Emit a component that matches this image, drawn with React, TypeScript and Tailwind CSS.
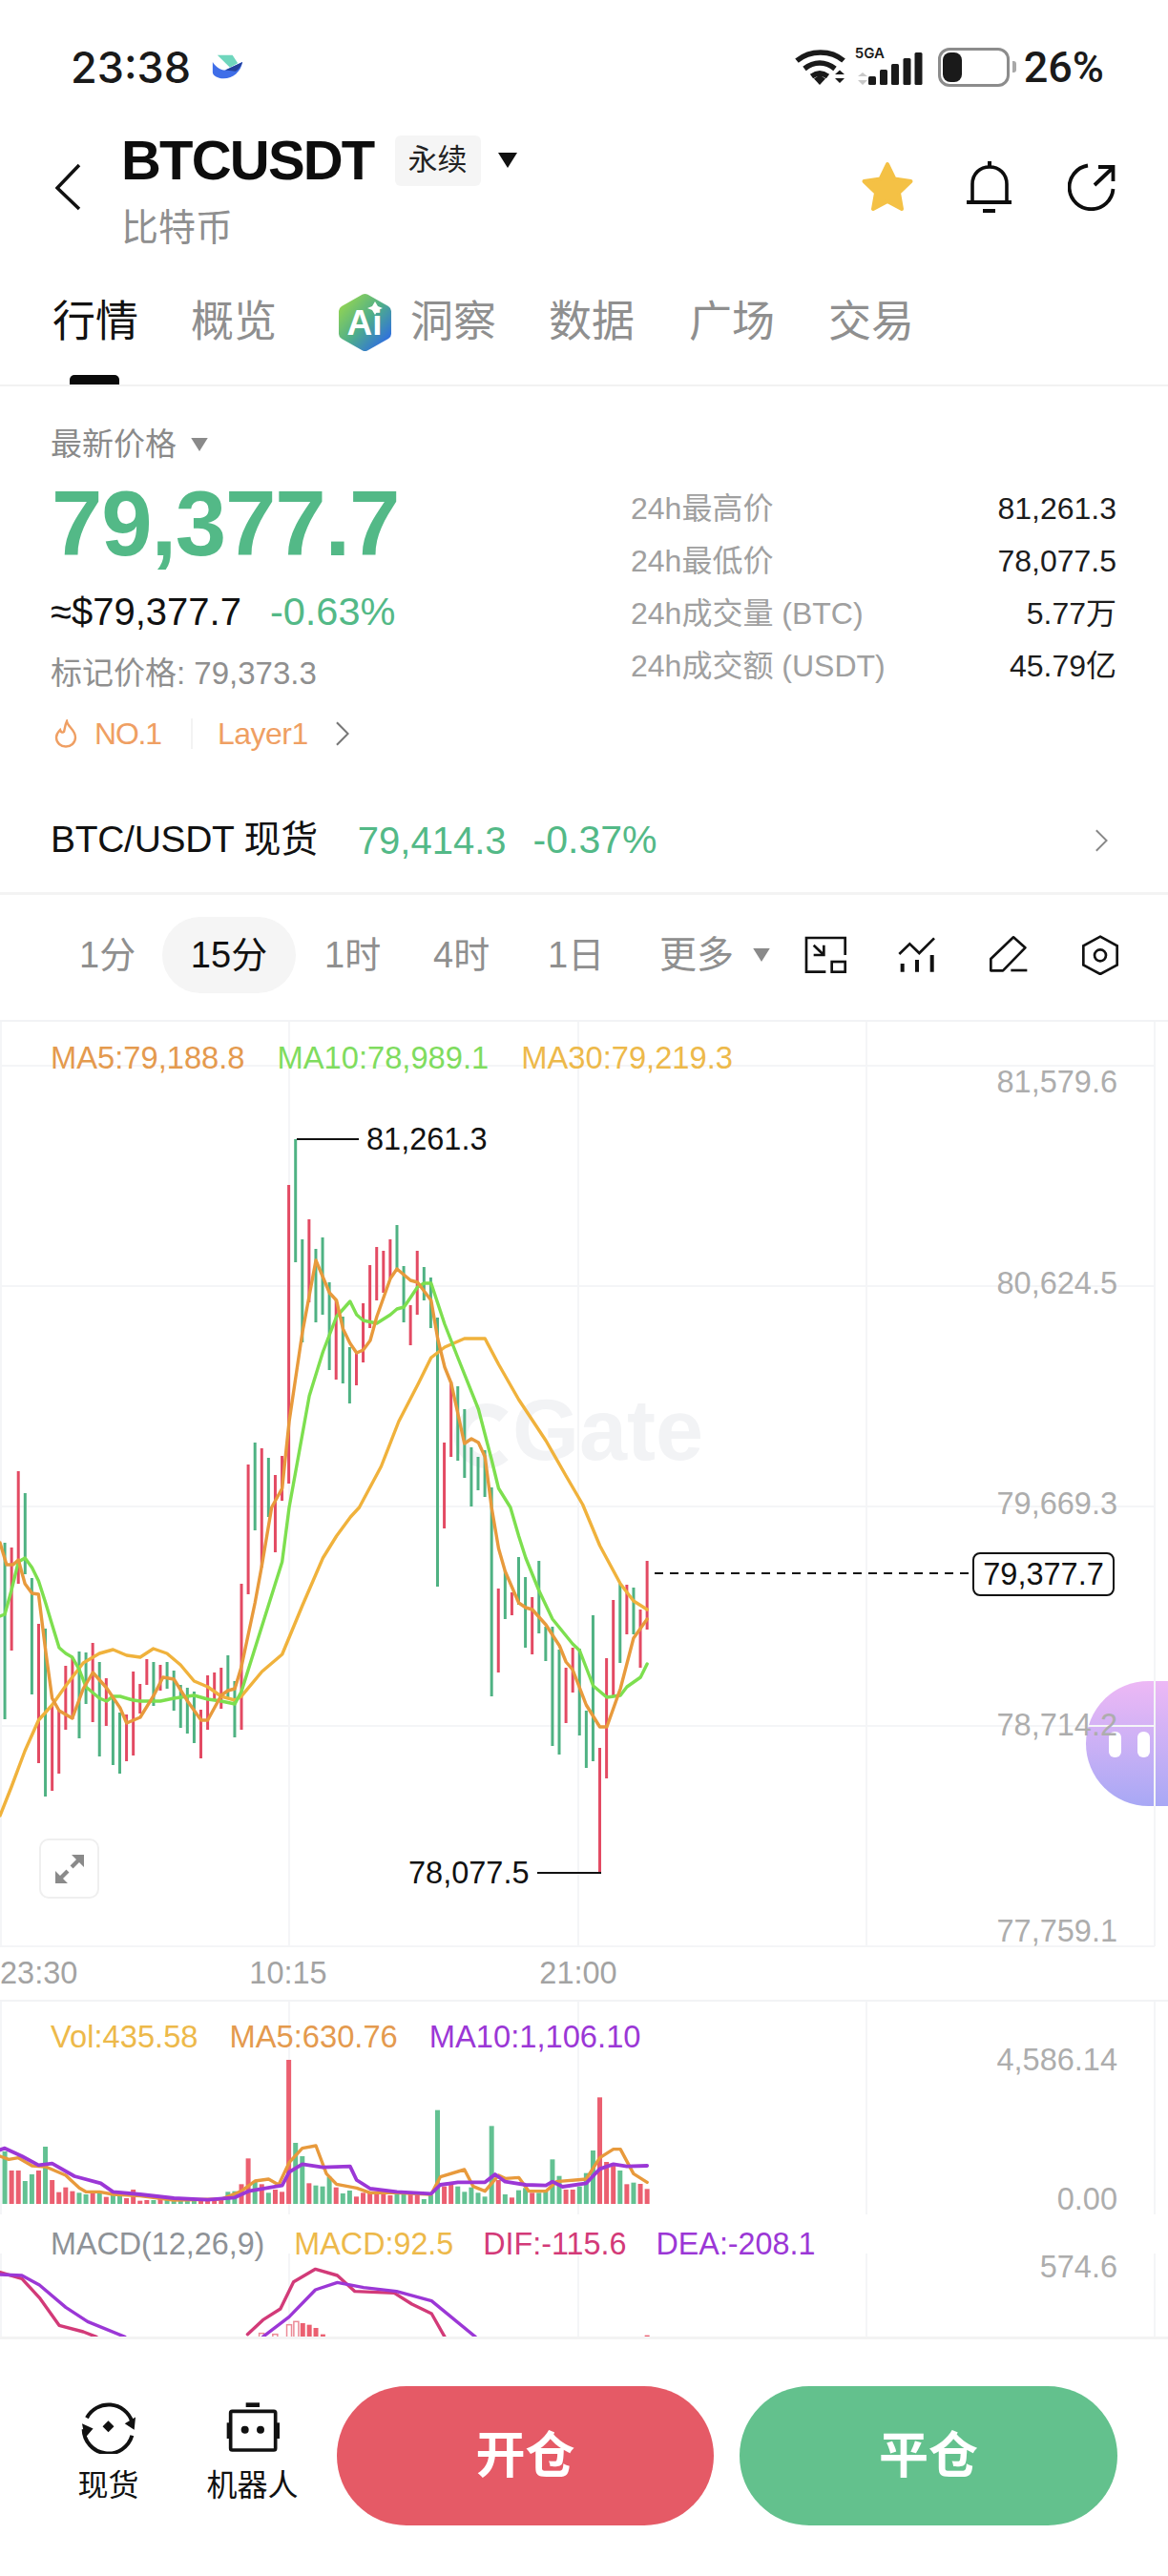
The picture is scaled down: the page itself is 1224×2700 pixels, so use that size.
import React from "react";

const C: [number, number, number][] = [
[0,1617,1802],[1,1622,1730],[1,1542,1660],[0,1565,1650],[0,1654,1776],[1,1702,1848],[0,1707,1883],[1,1786,1877],[1,1793,1859],[1,1746,1813],
[1,1737,1802],[0,1731,1822],[0,1732,1786],[1,1722,1805],[0,1742,1841],[1,1759,1809],[0,1780,1850],[0,1795,1859],[1,1797,1846],[1,1752,1840],
[1,1765,1796],[1,1739,1766],[0,1742,1788],[1,1745,1772],[0,1742,1770],[0,1751,1793],[0,1766,1811],[0,1769,1817],[0,1773,1827],[1,1792,1843],
[1,1756,1813],[1,1753,1781],[1,1748,1791],[0,1735,1780],[0,1762,1821],[1,1660,1813],[1,1535,1671],[0,1512,1604],[1,1518,1643],[0,1528,1590],
[1,1546,1627],[1,1526,1573],[1,1242,1555],[0,1194,1323],[0,1299,1407],[1,1278,1365],[0,1309,1386],[0,1297,1378],[0,1344,1436],[1,1362,1446],
[0,1380,1450],[0,1412,1471],[1,1417,1452],[1,1366,1428],[1,1326,1392],[1,1307,1363],[1,1311,1355],[1,1299,1340],[0,1284,1330],[0,1327,1386],
[1,1368,1410],[1,1311,1378],[0,1328,1363],[0,1339,1392],[0,1381,1663],[1,1512,1602],[1,1448,1527],[0,1453,1531],[0,1477,1549],[0,1517,1579],
[0,1527,1562],[0,1520,1569],[0,1559,1778],[1,1665,1753],[0,1646,1697],[1,1669,1693],[0,1632,1682],[0,1653,1727],[1,1674,1734],[0,1636,1712],
[0,1705,1741],[0,1705,1830],[0,1729,1839],[1,1748,1806],[1,1727,1774],[0,1728,1819],[0,1793,1853],[0,1693,1846],[1,1832,1963],[1,1738,1864],
[1,1677,1777],[0,1660,1743],[1,1661,1713],[0,1664,1713],[1,1687,1748],[1,1636,1708]];

const MA5 = [[0,1617],[15,1640],[30,1640],[42,1635],[57,1660],[73,1670],[88,1671],[104,1730],[119,1780],[135,1793],[165,1801],[190,1770],[212,1753],[243,1769],[274,1790],[289,1806],[320,1800],[351,1777],[372,1758],[397,1760],[428,1783],[459,1803],[474,1803],[505,1777],[520,1772],[536,1770],[551,1747],[582,1680],[598,1640],[620,1580],[644,1560],[660,1490],[690,1397],[721,1321],[752,1355],[768,1363],[783,1393],[799,1408],[814,1418],[829,1415],[845,1405],[860,1380],[891,1340],[906,1330],[937,1342],[953,1344],[984,1363],[999,1403],[1015,1433],[1030,1450],[1060,1513],[1076,1508],[1092,1512],[1107,1527],[1122,1580],[1138,1623],[1153,1647],[1184,1680],[1200,1685],[1215,1687],[1246,1703],[1277,1725],[1292,1742],[1307,1750],[1338,1787],[1369,1810],[1385,1810],[1416,1770],[1446,1717],[1477,1697]];
const MA10 = [[0,1694],[11,1692],[26,1667],[42,1637],[57,1633],[73,1643],[88,1657],[104,1680],[119,1703],[135,1727],[150,1733],[165,1737],[181,1750],[196,1768],[227,1780],[243,1783],[258,1778],[274,1778],[304,1782],[320,1783],[366,1783],[397,1780],[443,1777],[474,1781],[505,1783],[536,1786],[551,1773],[644,1637],[660,1580],[706,1463],[737,1417],[768,1380],[799,1364],[814,1378],[829,1384],[860,1387],[891,1378],[906,1372],[922,1370],[937,1360],[953,1349],[968,1345],[984,1345],[1015,1388],[1045,1423],[1092,1477],[1122,1530],[1138,1560],[1165,1580],[1184,1610],[1200,1633],[1230,1667],[1261,1697],[1307,1723],[1323,1730],[1354,1767],[1385,1779],[1416,1777],[1431,1768],[1462,1758],[1477,1744]];
const MA30 = [[0,1903],[26,1873],[57,1835],[88,1803],[119,1787],[150,1767],[190,1743],[227,1733],[258,1729],[289,1735],[320,1737],[350,1728],[381,1733],[412,1745],[443,1762],[474,1768],[505,1778],[536,1782],[551,1778],[598,1752],[644,1734],[690,1683],[737,1633],[768,1610],[800,1590],[820,1580],[870,1537],[910,1490],[955,1450],[984,1423],[1015,1412],[1060,1403],[1107,1403],[1138,1430],[1184,1467],[1246,1510],[1292,1547],[1330,1577],[1369,1620],[1416,1660],[1446,1678],[1477,1687]];

const VOL = [525,585,585,618,597,585,510,615,653,638,650,655,660,655,655,668,660,660,672,645,680,678,678,675,678,680,680,680,680,680,675,675,675,652,650,628,547,620,628,655,645,652,237,498,540,625,632,635,605,638,657,648,667,655,655,655,658,663,655,655,660,660,675,662,395,635,628,635,652,638,655,667,445,615,660,670,647,640,655,655,650,550,602,645,645,635,593,522,355,558,565,585,628,623,627,643];
const VMA5 = [[0,540],[20,550],[42,545],[73,570],[104,573],[150,600],[181,640],[196,652],[227,652],[258,660],[320,665],[397,678],[505,675],[551,650],[582,618],[613,612],[636,630],[660,560],[690,515],[721,507],[745,595],[768,628],[814,640],[845,655],[906,655],[984,660],[1005,605],[1060,582],[1080,635],[1107,650],[1138,600],[1153,610],[1184,607],[1207,650],[1246,650],[1270,620],[1338,612],[1369,545],[1400,518],[1416,518],[1446,595],[1477,622]];
const VMA10 = [[0,520],[11,515],[50,540],[88,568],[119,563],[170,603],[230,625],[258,652],[320,660],[397,672],[474,677],[536,670],[567,650],[644,632],[660,590],[690,565],[737,575],[799,572],[814,615],[845,642],[906,652],[984,658],[1005,630],[1045,622],[1107,622],[1130,597],[1153,620],[1200,630],[1246,632],[1261,620],[1284,636],[1338,625],[1369,580],[1400,565],[1431,572],[1477,570]];
const DIF1 = [[0,905],[50,925],[90,985],[135,1072],[190,1092],[220,1108]];
const DIF2 = [[565,1100],[600,1055],[640,1020],[670,935],[720,895],[770,915],[810,965],[900,970],[940,1005],[985,1035],[1015,1108]];
const DEA1 = [[0,912],[50,915],[90,945],[150,1015],[200,1060],[285,1108]];
const DEA2 = [[600,1108],[660,1045],[720,960],[770,937],[830,953],[905,965],[985,995],[1085,1108]];
const MBARS: [number, number, boolean][] = [[597,1097,true],[628,1100,true],[660,1070,true],[676,1060,true],[691,1065,false],[706,1070,false],[721,1080,false],[737,1100,false],[1477,1103,false]];

const px = (x: number) => x / 2.178;
const barX = (i: number) => 5.05 + 7.085 * i;
const main = (a: number[][]) => a.map(([x, y]) => `${px(x)},${y}`).join(" ");
const sub = (a: number[][]) => a.map(([x, y]) => `${px(x)},${2080 + y / 3}`).join(" ");

function Line({ points, color, w = 3.4 }: { points: string; color: string; w?: number }) {
  return <polyline points={points} fill="none" stroke={color} strokeWidth={w} strokeLinejoin="round" strokeLinecap="round" />;
}

function AxisText({ y, children }: { y: number; children: React.ReactNode }) {
  return <text x={1171} y={y + 11} textAnchor="end" fontSize={32.5} fill="#adadad">{children}</text>;
}

function Wifi() {
  return (
    <svg width="56" height="42" viewBox="0 0 56 42" fill="none">
      <path d="M3 14.5C17 3 39 3 52 14.5" stroke="#1a1a1a" strokeWidth="5.5" />
      <path d="M11 23C21 15 33 15 43 23" stroke="#1a1a1a" strokeWidth="5.5" />
      <path d="M18.5 31C24 27 30 27 35.5 31" stroke="#1a1a1a" strokeWidth="5.5" />
      <path d="M21 33.5L27 29.5L33 33.5L27 40Z" fill="#1a1a1a" />
      <path d="M43 29H53L48 24.500Z M43 33H53L48 38Z" fill="#1a1a1a" />
    </svg>
  );
}

function Signal() {
  return (
    <svg width="68" height="42" viewBox="0 0 68 42" fill="none" className="mt-[3px]">
      <path d="M0 28L5 24L10 28Z M0 32L10 32L5 37Z" fill="#c8c8c8" />
      <rect x="11" y="28" width="8" height="9" rx="1.500" fill="#1a1a1a" />
      <rect x="23" y="21" width="8" height="16" rx="1.500" fill="#1a1a1a" />
      <rect x="35" y="15" width="8" height="22" rx="1.500" fill="#1a1a1a" />
      <rect x="47.500" y="9" width="8" height="28" rx="1.500" fill="#1a1a1a" />
      <rect x="59.500" y="3" width="8" height="34" rx="1.500" fill="#1a1a1a" />
    </svg>
  );
}

function AiIcon() {
  return (
    <svg width="55" height="62" viewBox="0 0 55 62">
      <defs>
        <linearGradient id="aig" x1="0.1" y1="0.1" x2="0.9" y2="0.9">
          <stop offset="0" stopColor="#93d552" />
          <stop offset="0.5" stopColor="#4fae8a" />
          <stop offset="1" stopColor="#2d6be4" />
        </linearGradient>
      </defs>
      <path d="M25 1.500Q27.500 0.500 30 1.500L52 14Q55 16 55 19V43Q55 46 52 48L30 60.500Q27.500 61.500 25 60.500L3 48Q0 46 0 43V19Q0 16 3 14Z" fill="url(#aig)" />
      <text x="27" y="44" textAnchor="middle" fontSize="37" fontWeight="700" fill="#fff">Ai</text>
      <path d="M38 9L41 14L46 16L41 18L38 23L35 18L30 16L35 14Z" fill="#fff" />
    </svg>
  );
}

function Tri({ w, h, color }: { w: number; h: number; color: string }) {
  return (
    <svg width={w} height={h} viewBox="0 0 10 8" className="block">
      <path d="M0 0H10L5 8Z" fill={color} />
    </svg>
  );
}

function Chev({ h = 26, color = "#777" }: { h?: number; color?: string }) {
  return (
    <svg width={h * 0.6} height={h} viewBox="0 0 12 20" fill="none" className="block">
      <path d="M1.500 1L10.500 10L1.500 19" stroke={color} strokeWidth="1.600" />
    </svg>
  );
}

function Stat({ label, value }: { label: string; value: string }) {
  return (
    <div className="flex h-[55px] items-center justify-between text-[32px]">
      <span className="text-[#a0a0a0]">{label}</span>
      <span className="text-[#1c1c1c]">{value}</span>
    </div>
  );
}

const GRID = "#f4f5f7";

export default function App() {
  return (
    <div className="relative h-[2700px] w-[1224px] overflow-hidden bg-white font-['Liberation_Sans','Noto_Sans_CJK_SC',sans-serif] text-[#111]">
      {/* status bar */}
      <div className="flex h-[140px] items-center justify-between pl-[74px] pr-[67px]">
        <div className="flex items-center gap-[21px]">
          <span className="font-['Inter',sans-serif] text-[45px] font-medium leading-none text-[#1a1a1a]">23:38</span>
          <svg width="35" height="28" viewBox="40 35 105 85">
            <path d="M60 40H108L125 66L100 80Z" fill="#6fd6bd" />
            <path d="M45 62C55 78 70 88 85 88L140 62C135 92 110 115 80 115C60 115 45 105 45 95Z" fill="#3f6ee8" />
            <path d="M85 88L140 62C136 75 128 86 118 92Z" fill="#24409a" />
          </svg>
        </div>
        <div className="flex items-center">
          <Wifi />
          <div className="relative ml-[11px] h-[42px] w-[68px]">
            <span className="absolute -left-[3px] -top-[1px] font-['Inter',sans-serif] text-[15px] font-semibold leading-none text-[#1a1a1a]">5GA</span>
            <Signal />
          </div>
          <div className="relative ml-[16px] h-[41px] w-[75px] rounded-[12px] border-[3px] border-[#8c8c8c] p-[2px]">
            <div className="h-full w-[20px] rounded-[8px] bg-[#1a1a1a]" />
            <div className="absolute -right-[10px] top-[11px] h-[12px] w-[4px] rounded-r-[3px] bg-[#a8a8a8]" />
          </div>
          <span className="ml-[15px] font-['Roboto',sans-serif] text-[45px] font-medium leading-none text-[#1a1a1a]">26%</span>
        </div>
      </div>

      {/* header */}
      <div className="flex h-[130px] items-start">
        <svg width="27" height="50" viewBox="0 0 27 50" fill="none" className="ml-[58px] mt-[31px]">
          <path d="M25 2L2 26L25 48" stroke="#111" strokeWidth="3.500" />
        </svg>
        <div className="ml-[42px]">
          <div className="flex items-center">
            <span className="text-[58px] font-bold leading-[56px] tracking-[-1.800px] text-[#0d0d0d]">BTCUSDT</span>
            <span className="ml-[22px] flex h-[53px] w-[90px] items-center justify-center rounded-[6px] bg-[#f5f5f5] text-[31px] text-[#222]">永续</span>
            <span className="ml-[17px]"><Tri w={22} h={16} color="#111" /></span>
          </div>
          <div className="mt-[20px] text-[39px] leading-[46px] text-[#8f8f8f]">比特币</div>
        </div>
        <div className="ml-auto mr-[55px] mt-[28px] flex items-center">
          <svg width="56" height="54" viewBox="0 0 56 54">
            <path d="M28 3L35.500 18.500L52.500 21L40 33L43 50L28 42L13 50L16 33L3.500 21L20.500 18.500Z" fill="#f4c145" stroke="#f4c145" strokeWidth="4" strokeLinejoin="round" />
          </svg>
          <svg width="48" height="56" viewBox="0 0 48 56" fill="none" className="ml-[55px]">
            <path d="M24 1V7" stroke="#0d0d0d" strokeWidth="4" />
            <path d="M6 43V25C6 14 14 7 24 7C34 7 42 14 42 25V43" stroke="#0d0d0d" strokeWidth="3.600" />
            <path d="M0 44H47" stroke="#0d0d0d" strokeWidth="4" />
            <path d="M17 53H30" stroke="#0d0d0d" strokeWidth="4" />
          </svg>
          <svg width="50" height="50" viewBox="0 0 50 50" fill="none" className="ml-[58px]">
            <path d="M21 2.500A23 23 0 1 0 47.500 27" stroke="#0d0d0d" strokeWidth="3.800" />
            <path d="M28 23L47 5M32 4H47.500V19" stroke="#0d0d0d" strokeWidth="3.800" />
          </svg>
        </div>
      </div>

      {/* tabs */}
      <div className="border-b-2 border-[#f2f2f2]">
        <div className="mt-[46px] flex h-[44px] items-center pl-[55px] text-[45px] leading-[44px] text-[#8f8f8f]">
          <span className="w-[90px] text-[#111]">行情</span>
          <span className="ml-[55px] w-[90px]">概览</span>
          <span className="ml-[65px]"><AiIcon /></span>
          <span className="ml-[20px] w-[90px]">洞察</span>
          <span className="ml-[55px] w-[90px]">数据</span>
          <span className="ml-[57px] w-[90px]">广场</span>
          <span className="ml-[56px] w-[90px]">交易</span>
        </div>
        <div className="ml-[73px] mt-[33px] h-[10px] w-[52px] rounded-t-[5px] bg-[#0a0a0a]" />
      </div>

      {/* price info */}
      <div className="flex">
        <div className="w-[661px] pl-[53px] pt-[41px]">
          <div className="flex h-[40px] items-center text-[33px] text-[#8a8a8a]">
            <span>最新价格</span>
            <span className="ml-[13px]"><Tri w={22} h={14} color="#8a8a8a" /></span>
          </div>
          <div className="mt-[18px] h-[90px] pl-[1px] text-[96px] font-bold leading-[90px] tracking-[-1.200px] text-[#53b987]">79,377.7</div>
          <div className="mt-[24px] flex h-[46px] items-center">
            <span className="text-[40px] text-[#111]">≈$79,377.7</span>
            <span className="ml-[30px] text-[41.500px] text-[#53b987]">-0.63%</span>
          </div>
          <div className="mt-[22px] h-[40px] text-[33px] leading-[40px] text-[#8f8f8f]">标记价格: 79,373.3</div>
          <div className="mt-[23px] flex h-[40px] items-center text-[32px] text-[#ef9f63]">
            <svg width="24" height="30" viewBox="0 0 24 30" fill="none" className="ml-[4px]">
              <path d="M13 2C14 8 22 11 22 19C22 25 17 28.500 12 28.500C7 28.500 2 25 2 19C2 15 4 13 6 11C7 14 9 14 10 13C11 10 11 6 13 2Z" stroke="#ef9f63" strokeWidth="2.400" />
            </svg>
            <span className="ml-[18px] tracking-[-1.200px]">NO.1</span>
            <span className="ml-[31px] h-[32px] w-[2px] bg-[#f3f3f3]" />
            <span className="ml-[26px] tracking-[-0.500px]">Layer1</span>
            <span className="ml-[28px]"><Chev h={26} /></span>
          </div>
        </div>
        <div className="w-[509px] pt-[100px]">
          <Stat label="24h最高价" value="81,261.3" />
          <Stat label="24h最低价" value="78,077.5" />
          <Stat label="24h成交量 (BTC)" value="5.77万" />
          <Stat label="24h成交额 (USDT)" value="45.79亿" />
        </div>
      </div>

      {/* spot row */}
      <div className="mt-[37px] flex h-[112px] items-center border-b-[3px] border-[#f3f3f3] pl-[53px] pr-[63px] text-[40px]">
        <span className="text-[39px] tracking-[-0.300px] text-[#111]">BTC/USDT 现货</span>
        <span className="ml-[42px] text-[#53b987]">79,414.3</span>
        <span className="ml-[28px] text-[41px] text-[#53b987]">-0.37%</span>
        <span className="ml-auto"><Chev h={24} color="#888" /></span>
      </div>

      {/* timeframes */}
      <div className="flex h-[131px] items-center pb-[5px] text-[38px] text-[#8f8f8f]">
        <span className="ml-[83px] w-[60px]">1分</span>
        <span className="ml-[27px] flex h-[80px] w-[140px] items-center justify-center rounded-[40px] bg-[#f5f5f5] text-[#111]">15分</span>
        <span className="ml-[30px] w-[60px]">1时</span>
        <span className="ml-[54px] w-[64px]">4时</span>
        <span className="ml-[56px] w-[60px]">1日</span>
        <span className="ml-[57px] w-[80px] text-[39px]">更多</span>
        <span className="ml-[16px]"><Tri w={22} h={14} color="#8a8a8a" /></span>
        <svg width="46.700" height="41.700" viewBox="60 65 140 125" fill="none" stroke="#111" strokeWidth="8" className="ml-[33px]">
          <path d="M130 181H69V74H191V128" />
          <rect x="149" y="149" width="42" height="32" />
          <path d="M124 128L92 97" />
          <path d="M92 128H124V97" strokeWidth="8" />
        </svg>
        <svg width="41.700" height="41.700" viewBox="355 65 125 125" fill="none" stroke="#111" strokeWidth="8" className="ml-[51px]">
          <path d="M362 125L395 93L425 122L472 75" />
          <path d="M372 155V181M418 143V181M465 128V181" strokeWidth="12" />
        </svg>
        <svg width="41.700" height="41.700" viewBox="645 65 125 125" fill="none" stroke="#111" strokeWidth="8" className="ml-[55px]">
          <path d="M723 72L760 105L690 177H652V140Z" strokeLinejoin="round" />
          <path d="M715 176H766" />
        </svg>
        <svg width="40" height="41.700" viewBox="935 65 120 125" fill="none" stroke="#111" strokeWidth="8" className="ml-[55px]">
          <path d="M995 70L1048 99V159L995 188L942 159V99Z" />
          <circle cx="995" cy="129" r="18" />
        </svg>
      </div>

      {/* main chart */}
      <div className="relative h-[1029px] border-y-2 border-[#f2f3f5]">
        <div className="absolute right-0 top-[691px] flex h-[131px] w-[86px] items-center justify-start gap-[17px] rounded-l-[66px] bg-gradient-to-b from-[#edb8f5] to-[#a8a8f5] pl-[24px]">
          <span className="mt-[2px] h-[27px] w-[13px] rounded-[6px] bg-white" />
          <span className="mt-[2px] h-[27px] w-[13px] rounded-[6px] bg-white" />
        </div>
        <svg width="1224" height="1025" viewBox="0 1071 1224 1025" className="relative block">
          {[1117, 1348, 1579, 1809, 2040].map((y) => (
            <line key={y} x1="0" x2="1210" y1={y} y2={y} stroke={GRID} strokeWidth="2" />
          ))}
          {[1, 303, 606, 908, 1210].map((x) => (
            <line key={x} x1={x} x2={x} y1="1071" y2="2040" stroke={GRID} strokeWidth="2" />
          ))}
          <path d="M528 1485A27 27 0 1 0 528 1525" fill="none" stroke="#f2f3f5" strokeWidth="14" />
          <text x="537" y="1530" fontSize="90" fontWeight="700" fill="#f2f3f5">Gate</text>
          {C.map(([r, a, b], i) => (
            <line key={i} x1={barX(i)} x2={barX(i)} y1={a} y2={b} stroke={r ? "#e34a63" : "#4fb283"} strokeWidth="3" />
          ))}
          <Line points={main(MA30)} color="#f0b23c" />
          <Line points={main(MA10)} color="#7ddf4f" />
          <Line points={main(MA5)} color="#e89a3c" />
          <path d="M311 1194H376" stroke="#111" strokeWidth="2" />
          <text x="384" y="1205" fontSize="32.500" fill="#111">81,261.3</text>
          <path d="M563 1963H630" stroke="#111" strokeWidth="2" />
          <text x="428" y="1974" fontSize="32.500" fill="#111">78,077.5</text>
          <path d="M686 1649H1020" stroke="#111" strokeWidth="2" strokeDasharray="9 7" />
          <AxisText y={1134}>81,579.6</AxisText>
          <AxisText y={1345}>80,624.5</AxisText>
          <AxisText y={1576}>79,669.3</AxisText>
          <AxisText y={1808}>78,714.2</AxisText>
          <AxisText y={2024}>77,759.1</AxisText>
          <rect x="1020" y="1628" width="147" height="44" rx="7" fill="#fff" stroke="#111" strokeWidth="2" />
          <text x="1093.500" y="1661" textAnchor="middle" fontSize="32.500" fill="#111">79,377.7</text>
          <text x="0" y="2079" fontSize="32.500" fill="#a3a3a3">23:30</text>
          <text x="302" y="2079" textAnchor="middle" fontSize="32.500" fill="#a3a3a3">10:15</text>
          <text x="606" y="2079" textAnchor="middle" fontSize="32.500" fill="#a3a3a3">21:00</text>
        </svg>
        <div className="absolute left-[53px] top-[19px] flex gap-[34px] text-[32.700px] leading-[38px]">
          <span className="text-[#e49a4e]">MA5:79,188.8</span>
          <span className="text-[#7fdc5e]">MA10:78,989.1</span>
          <span className="text-[#edb94a]">MA30:79,219.3</span>
        </div>
        <div className="absolute left-[41px] top-[856px] flex h-[63px] w-[63px] items-center justify-center rounded-[10px] border-2 border-[#efefef] bg-white">
          <svg width="32" height="32" viewBox="0 0 32 32" fill="#8a8a8a">
            <path d="M31 1V14L26 9L9 26L14 31H1V18L6 23L23 6L18 1Z" />
            <path d="M14 14L18 18" stroke="#fff" strokeWidth="6" />
          </svg>
        </div>
      </div>

      {/* volume */}
      <div className="relative h-[227px]">
        <svg width="1224" height="227" viewBox="0 2098 1224 227" className="block">
          {[1, 303, 606, 908, 1210].map((x) => (
            <line key={x} x1={x} x2={x} y1="2098" y2="2321" stroke={GRID} strokeWidth="2" />
          ))}
          {VOL.map((t, i) => (
            <rect key={i} x={barX(i) - 2.500} y={2080 + t / 3} width="5" height={2310 - (2080 + t / 3)} fill={C[i][0] ? "#eb5f70" : "#63c192"} />
          ))}
          <Line points={sub(VMA5)} color="#e89a3c" />
          <Line points={sub(VMA10)} color="#9b37d6" w={3.8} />
          <AxisText y={2159}>4,586.14</AxisText>
          <AxisText y={2305}>0.00</AxisText>
        </svg>
        <div className="absolute left-[53px] top-[18px] flex gap-[33px] text-[32.700px] leading-[38px]">
          <span className="text-[#edb94a]">Vol:435.58</span>
          <span className="text-[#e49a4e]">MA5:630.76</span>
          <span className="text-[#9b37d6]">MA10:1,106.10</span>
        </div>
      </div>

      {/* macd */}
      <div className="relative h-[124px] overflow-hidden">
        <svg width="1224" height="124" viewBox="0 2325 1224 124" className="block">
          {[1, 303, 606, 908, 1210].map((x) => (
            <line key={x} x1={x} x2={x} y1="2362" y2="2449" stroke={GRID} strokeWidth="2" />
          ))}
          {MBARS.map(([x, t, hollow], i) => (
            <rect key={i} x={px(x) - 2.500} y={2080 + t / 3} width="5" height="30" fill={hollow ? "#fff" : "#eb5f70"} stroke={hollow ? "#eb8a96" : "none"} strokeWidth="1.500" />
          ))}
          <Line points={sub(DIF1)} color="#d23a78" />
          <Line points={sub(DIF2)} color="#d23a78" />
          <Line points={sub(DEA1)} color="#9b37d6" />
          <Line points={sub(DEA2)} color="#9b37d6" />
          <AxisText y={2376}>574.6</AxisText>
        </svg>
        <div className="absolute left-[53px] top-[8px] flex gap-[31px] whitespace-nowrap text-[32.300px] leading-[38px]">
          <span className="text-[#8e9297]">MACD(12,26,9)</span>
          <span className="text-[#edb94a]">MACD:92.5</span>
          <span className="text-[#d33a78]">DIF:-115.6</span>
          <span className="text-[#9b37d6]">DEA:-208.1</span>
        </div>
      </div>

      {/* bottom bar */}
      <div className="flex h-[251px] items-start border-t-[3px] border-[#f3f3f3] bg-white pl-[82px] pt-[49px]">
        <div className="flex w-[63px] flex-col items-center pt-[13px]">
          <svg width="57" height="58" viewBox="45 25 170 175" fill="none" className="shrink-0">
            <path d="M62 86A78 78 0 0 1 205 98" stroke="#111" strokeWidth="12" />
            <path d="M205 142A78 78 0 0 1 52 122" stroke="#111" strokeWidth="12" />
            <path d="M216 84L212 124L182 104Z M47 104L82 120L56 150Z" fill="#111" />
            <path d="M130 95L148 113L130 131L112 113Z" fill="#111" />
          </svg>
          <span className="mt-[14px] whitespace-nowrap text-[32px] leading-[38px] text-[#111]">现货</span>
        </div>
        <div className="ml-[71px] flex w-[97px] flex-col items-center pt-[15px]">
          <svg width="56" height="56" viewBox="498 30 168 168" fill="none" className="shrink-0">
            <rect x="560" y="37" width="43" height="14" fill="#111" />
            <rect x="512" y="64" width="141" height="122" rx="5" stroke="#111" strokeWidth="11" />
            <rect x="500" y="100" width="12" height="50" fill="#111" />
            <rect x="654" y="100" width="12" height="50" fill="#111" />
            <circle cx="557" cy="122" r="12" fill="#111" />
            <circle cx="606" cy="122" r="12" fill="#111" />
          </svg>
          <span className="mt-[14px] whitespace-nowrap text-[32px] leading-[38px] text-[#111]">机器人</span>
        </div>
        <div className="ml-[40px] flex h-[146px] w-[395px] items-center justify-center rounded-full bg-[#e55a66] text-[52px] font-bold text-white">开仓</div>
        <div className="ml-[27px] flex h-[146px] w-[396px] items-center justify-center rounded-full bg-[#63c18d] text-[52px] font-bold text-white">平仓</div>
      </div>
    </div>
  );
}
